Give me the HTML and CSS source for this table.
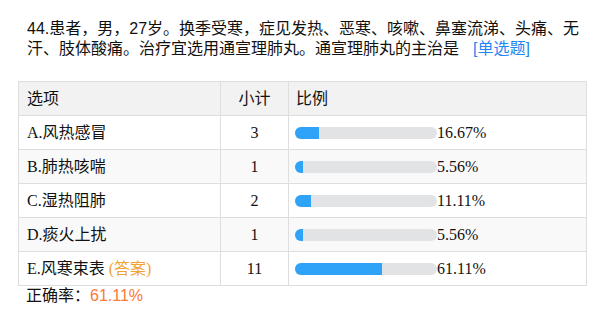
FILE: index.html
```html
<!DOCTYPE html>
<html lang="zh-CN">
<head>
<meta charset="utf-8">
<title>题目统计</title>
<link rel="stylesheet" href="styles.css">
</head>
<body>
<div class="wrap">
  <div class="question">44.患者，男，27岁。换季受寒，症见发热、恶寒、咳嗽、鼻塞流涕、头痛、无汗、肢体酸痛。治疗宜选用通宣理肺丸。通宣理肺丸的主治是<span class="qtype">[单选题]</span></div>
  <table class="stats">
    <thead>
      <tr><th class="c-opt">选项</th><th class="c-num">小计</th><th class="c-pct">比例</th></tr>
    </thead>
    <tbody>
      <tr><td class="c-opt">A.风热感冒</td><td class="c-num">3</td><td class="c-pct"><span class="bar"><span class="fill" style="width:16.67%"></span></span>16.67%</td></tr>
      <tr><td class="c-opt">B.肺热咳喘</td><td class="c-num">1</td><td class="c-pct"><span class="bar"><span class="fill" style="width:5.56%"></span></span>5.56%</td></tr>
      <tr><td class="c-opt">C.湿热阻肺</td><td class="c-num">2</td><td class="c-pct"><span class="bar"><span class="fill" style="width:11.11%"></span></span>11.11%</td></tr>
      <tr><td class="c-opt">D.痰火上扰</td><td class="c-num">1</td><td class="c-pct"><span class="bar"><span class="fill" style="width:5.56%"></span></span>5.56%</td></tr>
      <tr><td class="c-opt">E.风寒束表 <span class="answer">(答案)</span></td><td class="c-num">11</td><td class="c-pct"><span class="bar"><span class="fill" style="width:61.11%"></span></span>61.11%</td></tr>
    </tbody>
  </table>
  <div class="rate">正确率：<span class="rate-val">61.11%</span></div>
</div>
</body>
</html>
```
FILE: styles.css
```css
* { box-sizing: border-box; }
html, body { margin: 0; padding: 0; background: #fff; }
.wrap {
  padding: 19px 13px 0 18px;
  color: #111;
}
.question {
  padding: 0 0 0 9px;
  font-family: "Liberation Sans", "Noto Sans CJK SC", sans-serif;
  font-size: 16px;
  line-height: 20px;
  margin-bottom: 22px;
}
.qtype {
  display: inline-block;
  line-height: 20px;
  height: 20px;
  vertical-align: top;
  color: #1f86f2;
  margin-left: 14px;
}
.stats {
  width: 569px;
  border-collapse: collapse;
  font-family: "Liberation Serif", "Noto Sans CJK SC", serif;
  font-size: 16px;
  color: #111;
}
.stats th, .stats td {
  border: 1px solid #dedede;
  height: 34px;
  padding: 0 8px;
  font-weight: normal;
  text-align: left;
  vertical-align: middle;
  line-height: 20px;
}
.stats thead th { background: #f2f2f2; }
.stats tbody tr:nth-child(even) td { background: #f9f9f9; }
.stats .c-opt { width: 202px; }
.stats .c-num { width: 68px; text-align: center; }
.stats th.c-pct { padding-left: 7px; }
.stats td.c-pct { padding-left: 6px; }
.answer { color: #f0a233; }
.bar {
  display: inline-block;
  vertical-align: middle;
  position: relative;
  top: -1px;
  width: 142px;
  height: 12px;
  border-radius: 6px;
  background: #e2e3e5;
  overflow: hidden;
}
.fill {
  display: block;
  height: 100%;
  background: #2ea3f7;
}
.rate {
  padding-left: 8px;
  font-family: "Liberation Sans", "Noto Sans CJK SC", sans-serif;
  font-size: 16px;
  line-height: 20px;
  padding-top: 0;
}
.rate-val { color: #fa7a35; }
```
